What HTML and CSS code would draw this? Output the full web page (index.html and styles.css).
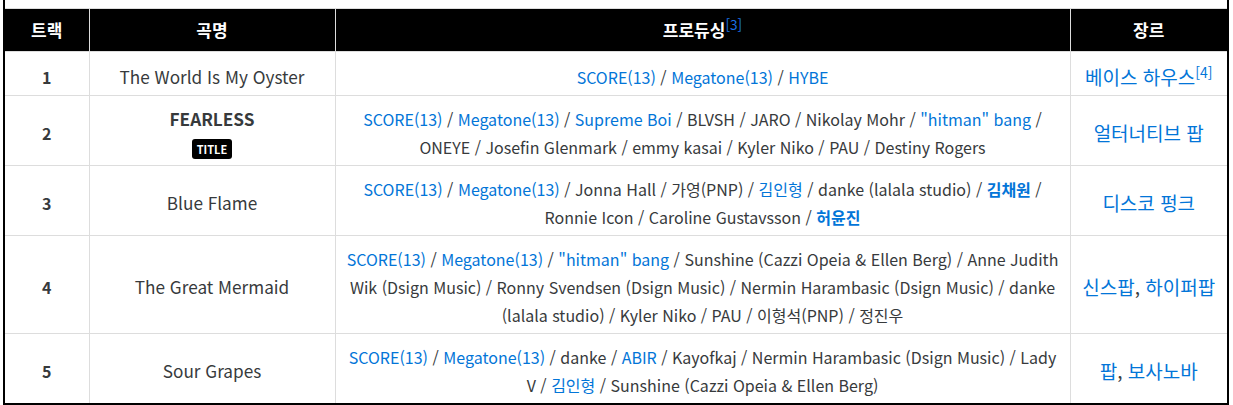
FILE: index.html
```html
<!DOCTYPE html>
<html lang="ko">
<head>
<meta charset="utf-8">
<link rel="stylesheet" href="styles.css">
</head>
<body>
<div class="frame">
<table class="tracks">
<colgroup><col class="c1"><col class="c2"><col class="c3"><col class="c4"></colgroup>
<thead>
<tr><th>트랙</th><th>곡명</th><th>프로듀싱<sup class="ref">[3]</sup></th><th>장르</th></tr>
</thead>
<tbody>
<tr class="has-ref">
<td class="num">1</td>
<td class="song">The World Is My Oyster</td>
<td class="prod"><a>SCORE(13)</a> / <a>Megatone(13)</a> / <a>HYBE</a></td>
<td class="genre"><a>베이스 하우스</a><sup class="ref">[4]</sup></td>
</tr>
<tr>
<td class="num">2</td>
<td class="song"><b>FEARLESS</b><br><span class="badge">TITLE</span></td>
<td class="prod"><a>SCORE(13)</a> / <a>Megatone(13)</a> / <a>Supreme Boi</a> / BLVSH / JARO / Nikolay Mohr / <a>"hitman" bang</a> / ONEYE / Josefin Glenmark / emmy kasai / Kyler Niko / PAU / Destiny Rogers</td>
<td class="genre"><a>얼터너티브 팝</a></td>
</tr>
<tr>
<td class="num">3</td>
<td class="song">Blue Flame</td>
<td class="prod"><a>SCORE(13)</a> / <a>Megatone(13)</a> / Jonna Hall / 가영(PNP) / <a>김인형</a> / danke (lalala studio) / <a class="strong">김채원</a> / Ronnie Icon / Caroline Gustavsson / <a class="strong">허윤진</a></td>
<td class="genre"><a>디스코 펑크</a></td>
</tr>
<tr>
<td class="num">4</td>
<td class="song">The Great Mermaid</td>
<td class="prod"><a>SCORE(13)</a> / <a>Megatone(13)</a> / <a>"hitman" bang</a> / Sunshine (Cazzi Opeia &amp; Ellen Berg) / Anne Judith Wik (Dsign Music) / Ronny Svendsen (Dsign Music) / Nermin Harambasic (Dsign Music) / danke (lalala studio) / Kyler Niko / PAU / 이형석(PNP) / 정진우</td>
<td class="genre"><a>신스팝</a>, <a>하이퍼팝</a></td>
</tr>
<tr>
<td class="num">5</td>
<td class="song">Sour Grapes</td>
<td class="prod"><a>SCORE(13)</a> / <a>Megatone(13)</a> / danke / <a>ABIR</a> / Kayofkaj / Nermin Harambasic (Dsign Music) / Lady V / <a>김인형</a> / Sunshine (Cazzi Opeia &amp; Ellen Berg)</td>
<td class="genre"><a>팝</a>, <a>보사노바</a></td>
</tr>
</tbody>
</table>
</div>
</body>
</html>
```
FILE: styles.css
```css
html, body {
  margin: 0;
  padding: 0;
  background: #fff;
}
body {
  font-family: "Noto Sans CJK KR", "Noto Sans", sans-serif;
  font-size: 16px;
  color: #373a3c;
}
.frame {
  margin-left: 3px;
  width: 1222px;
  padding-top: 8px;
  border-left: 2px solid #000;
  border-right: 2px solid #000;
  border-bottom: 2px solid #000;
}
.tracks {
  width: 100%;
  border-collapse: collapse;
  table-layout: fixed;
}
.c1 { width: 84px; }
.c2 { width: 246px; }
.c3 { width: 735px; }
.c4 { width: 157px; }
.tracks th,
.tracks td {
  border: 1px solid #dddddd;
  padding: 9px 10px 4px;
  line-height: 28px;
  text-align: center;
  vertical-align: middle;
}
.tracks tr.has-ref td {
  padding-top: 11px;
}
.tracks th {
  padding: 7px 10px 7px;
}
.tracks tr > :first-child { border-left: none; }
.tracks tr > :last-child { border-right: none; }
.tracks tbody tr:last-child td { border-bottom: none; }
.tracks th {
  background: #000;
  color: #fff;
  font-weight: 700;
  font-size: 17px;
}
.ref {
  color: #0275d8;
  font-size: 0.8em;
  line-height: 0;
  vertical-align: super;
}
th .ref {
  color: #1a73e8;
  font-weight: 400;
}
a {
  color: #0275d8;
  text-decoration: none;
}
a.strong {
  font-weight: 700;
}
.num {
  font-weight: 700;
}
.song {
  font-size: 17.2px;
}
.genre {
  font-size: 19px;
}
.genre .ref {
  font-size: 14px;
}
.badge {
  display: inline-block;
  background: #000;
  color: #fff;
  font-size: 11px;
  font-weight: 700;
  line-height: 20px;
  padding: 0 5px;
  border-radius: 3px;
  vertical-align: middle;
}
```
